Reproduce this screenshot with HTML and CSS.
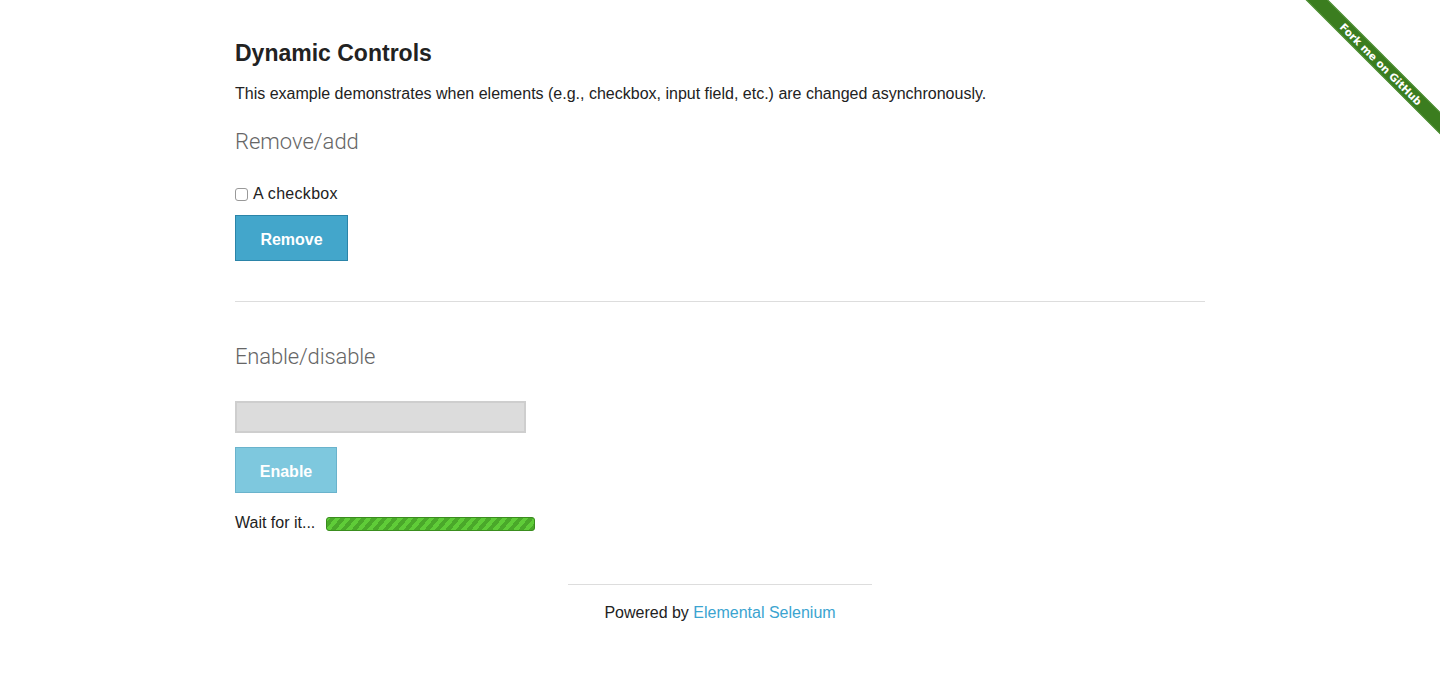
FILE: index.html
```html
<!DOCTYPE html>
<html>
<head>
<meta charset="utf-8">
<link rel="stylesheet" href="styles.css">
</head>
<body>
<a class="ribbon-wrap" href="#"><span class="ribbon">Fork me on GitHub</span></a>
<div class="container">
  <h3 class="title">Dynamic Controls</h3>
  <p class="intro">This example demonstrates when elements (e.g., checkbox, input field, etc.) are changed asynchronously.</p>
  <h4 class="subtitle">Remove/add</h4>
  <div class="check-row"><input type="checkbox" class="cb"><span>A checkbox</span></div>
  <button class="btn btn-remove">Remove</button>
  <hr class="divider">
  <h4 class="subtitle subtitle-2">Enable/disable</h4>
  <input type="text" class="text-input" disabled>
  <button class="btn btn-enable">Enable</button>
  <div class="wait-row"><span>Wait for it...</span><span class="progress"></span></div>
</div>
<footer class="footer">
  <hr class="footer-line">
  <div class="footer-text">Powered by <a href="#" class="footer-link">Elemental Selenium</a></div>
</footer>
</body>
</html>
```
FILE: styles.css
```css
html, body { margin: 0; padding: 0; }
body {
  font-family: "Liberation Sans", Arial, sans-serif;
  color: #222;
  background: #fff;
  overflow: hidden;
  height: 698px;
}
.container {
  width: 970px;
  margin: 0 auto;
  display: flex;
  flex-direction: column;
  align-items: flex-start;
}
.title {
  font-size: 23px;
  font-weight: bold;
  margin: 40px 0 0;
  line-height: 26px;
  color: #222;
}
.intro {
  font-size: 16px;
  margin: 18px 0 0;
  line-height: 20px;
}
.subtitle {
  font-family: Roboto, "Liberation Sans", sans-serif;
  font-size: 22px;
  font-weight: 300;
  color: #666;
  margin: 25px 0 0;
  line-height: 26px;
}
.subtitle-2 { margin-top: 42px; letter-spacing: -0.15px; }
.check-row {
  display: flex;
  align-items: center;
  font-size: 16px;
  margin-top: 29px;
  height: 20px;
  letter-spacing: 0.3px;
}
.cb {
  appearance: none;
  width: 13px;
  height: 13px;
  border: 1px solid #999;
  border-radius: 3px;
  margin: 1px 5px 0 0;
  background: #fff;
  box-sizing: border-box;
}
.btn {
  font-family: "Liberation Sans", Arial, sans-serif;
  font-size: 16px;
  font-weight: bold;
  color: #fff;
  border: 1px solid #2b84a8;
  background: #43a6cb;
  height: 46px;
  padding: 3px 0 0;
  margin-top: 11px;
}
.btn-remove { width: 113px; }
.divider {
  width: 970px;
  border: 0;
  border-top: 1px solid #ddd;
  margin: 40px 0 0;
}
.text-input {
  width: 291px;
  height: 32px;
  box-sizing: border-box;
  border: 2px solid #cecece;
  background: #dcdcdc;
  margin: 31px 0 0;
  padding: 0;
}
.btn-enable {
  width: 102px;
  background: #7ec8de;
  border-color: #6ab3cc;
  margin-top: 14px;
}
.wait-row {
  display: flex;
  align-items: center;
  font-size: 16px;
  margin-top: 20px;
  height: 20px;
}
.progress {
  display: inline-block;
  width: 209px;
  height: 14px;
  box-sizing: border-box;
  margin-left: 11px;
  margin-top: 2px;
  border: 1px solid #3a8d1e;
  border-radius: 3px;
  background-color: #4aa82a;
  background-image: repeating-linear-gradient(-50deg, #4aa82a 0 4px, #5fcc38 4px 8px);
}
.footer {
  display: flex;
  flex-direction: column;
  align-items: center;
  margin-top: 51px;
}
.footer-line {
  width: 304px;
  border: 0;
  border-top: 1px solid #ddd;
  margin: 0;
}
.footer-text {
  font-size: 16px;
  margin-top: 18px;
  line-height: 20px;
}
.footer-link { color: #3ba4d0; text-decoration: none; }
.ribbon-wrap {
  position: absolute;
  top: 0;
  right: 0;
  width: 150px;
  height: 150px;
  overflow: hidden;
  text-decoration: none;
}
.ribbon {
  position: absolute;
  top: 56px;
  left: -19px;
  width: 220px;
  height: 16px;
  box-sizing: border-box;
  transform: rotate(45deg);
  background: #3b7d1f;
  color: #fff;
  font-family: "DejaVu Sans", sans-serif;
  font-size: 10.5px;
  font-weight: bold;
  text-align: center;
  line-height: 14px;
  border-top: 1px solid #5c9a44;
  border-bottom: 1px solid #5c9a44;
}
```
